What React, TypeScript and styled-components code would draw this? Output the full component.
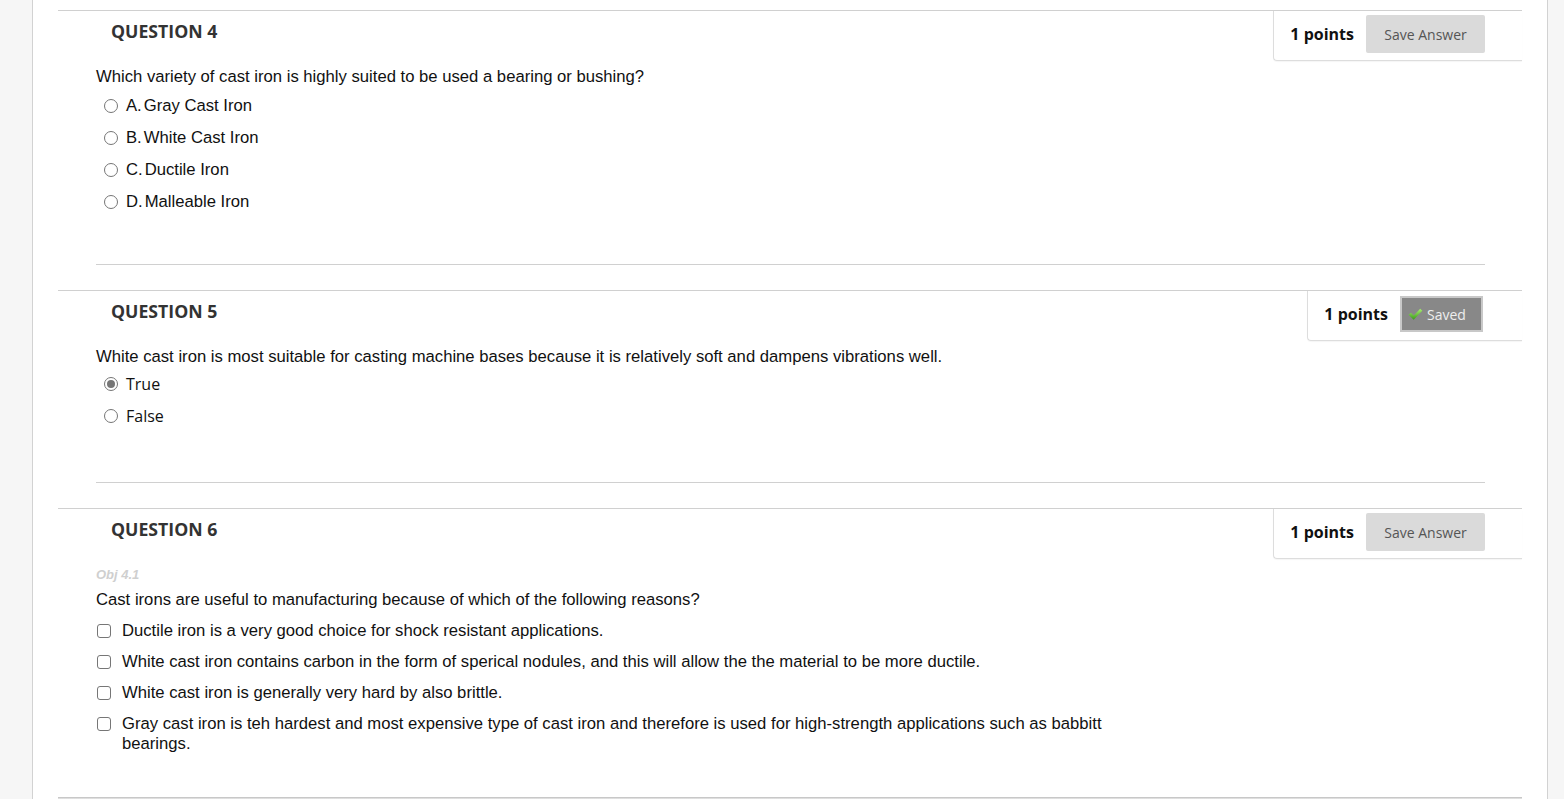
import React from 'react';
import styled, { createGlobalStyle } from 'styled-components';

const GlobalStyle = createGlobalStyle`
  html, body {
    margin: 0;
    padding: 0;
    background: #f6f6f6;
  }
  body {
    font-family: "Liberation Sans", Arial, sans-serif;
    overflow: hidden;
  }
`;

type Choice = { label: string; prefix?: string; checked?: boolean };

type Question = {
  number: number;
  text: string;
  kind: 'radio' | 'check';
  saved?: boolean;
  objective?: string;
  openSans?: boolean;
  bottom: number;
  choices: Choice[];
};

const questions: Question[] = [
  {
    number: 4,
    text: 'Which variety of cast iron is highly suited to be used a bearing or bushing?',
    kind: 'radio',
    bottom: 46,
    choices: [
      { prefix: 'A.', label: 'Gray Cast Iron' },
      { prefix: 'B.', label: 'White Cast Iron' },
      { prefix: 'C.', label: 'Ductile Iron' },
      { prefix: 'D.', label: 'Malleable Iron' },
    ],
  },
  {
    number: 5,
    text: 'White cast iron is most suitable for casting machine bases because it is relatively soft and dampens vibrations well.',
    kind: 'radio',
    saved: true,
    openSans: true,
    bottom: 50,
    choices: [{ label: 'True', checked: true }, { label: 'False' }],
  },
  {
    number: 6,
    text: 'Cast irons are useful to manufacturing because of which of the following reasons?',
    kind: 'check',
    objective: 'Obj 4.1',
    bottom: 38,
    choices: [
      { label: 'Ductile iron is a very good choice for shock resistant applications.' },
      { label: 'White cast iron contains carbon in the form of sperical nodules, and this will allow the the material to be more ductile.' },
      { label: 'White cast iron is generally very hard by also brittle.' },
      { label: 'Gray cast iron is teh hardest and most expensive type of cast iron and therefore is used for high-strength applications such as babbitt bearings.' },
    ],
  },
];

const CheckMark = () => (
  <svg width="15" height="13" viewBox="0 0 14 12">
    <defs>
      <linearGradient id="chk" x1="0" y1="0" x2="0" y2="1">
        <stop offset="0" stopColor="#a8f070" />
        <stop offset="1" stopColor="#3c9a1a" />
      </linearGradient>
    </defs>
    <path d="M0.5 6.2 L2.8 4.4 L5.3 6.9 L11.4 0.6 L13.4 2.4 L5.3 10.8 Z" fill="url(#chk)" />
  </svg>
);

const App = () => {
  return (
    <>
      <GlobalStyle />
      <Page>
        <LeftGutter />
        <Main>
          {questions.map((q, idx) => {
            const last = idx === questions.length - 1;
            return (
              <Block key={q.number} $last={last}>
                <Header>
                  <Title>QUESTION {q.number}</Title>
                  <PointsBox>
                    <Points>1 points</Points>
                    {q.saved ? (
                      <SavedButton>
                        <CheckMark />
                        Saved
                      </SavedButton>
                    ) : (
                      <SaveButton>Save Answer</SaveButton>
                    )}
                  </PointsBox>
                </Header>
                <Body $last={last} $bottom={q.bottom}>
                  {q.objective && <Objective>{q.objective}</Objective>}
                  <QuestionText>{q.text}</QuestionText>
                  <Choices $gap={q.kind === 'check' ? 5 : q.openSans ? 1 : 3}>
                    {q.choices.map((c, i) =>
                      q.kind === 'radio' ? (
                        <RadioRow key={i}>
                          <Radio $checked={!!c.checked} />
                          <ChoiceLabel $openSans={!!q.openSans}>
                            {c.prefix && <Prefix>{c.prefix}</Prefix>}
                            {c.label}
                          </ChoiceLabel>
                        </RadioRow>
                      ) : (
                        <CheckRow key={i}>
                          <Box />
                          <CheckLabel>{c.label}</CheckLabel>
                        </CheckRow>
                      )
                    )}
                  </Choices>
                </Body>
              </Block>
            );
          })}
          <NextBlock />
        </Main>
        <RightGutter />
      </Page>
    </>
  );
};

export default App;

const Page = styled.div`
  display: flex;
  min-height: 100vh;
  background: #f6f6f6;
`;

const LeftGutter = styled.div`
  width: 32px;
  flex-shrink: 0;
  background: #f6f6f6;
`;

const RightGutter = styled.div`
  flex: 1;
  background: #f6f6f6;
`;

const Main = styled.div`
  width: 1516px;
  flex-shrink: 0;
  background: #fff;
  border-left: 1px solid #d2d2d2;
  border-right: 1px solid #d2d2d2;
  padding: 10px 25px 0 25px;
  box-sizing: border-box;
`;

const Block = styled.div<{ $last: boolean }>`
  border-top: 1px solid #d0d0d0;
  margin-bottom: ${(p) => (p.$last ? '0' : '25px')};
`;

const Header = styled.div`
  display: flex;
  justify-content: space-between;
  align-items: flex-start;
`;

const Title = styled.h2`
  margin: 0;
  padding: 8px 0 0 53px;
  font-family: "Open Sans", sans-serif;
  font-weight: 700;
  font-size: 17.7px;
  line-height: 24px;
  color: #333;
`;

const PointsBox = styled.div`
  display: flex;
  align-items: center;
  gap: 12px;
  padding: 4px 37px 7px 16px;
  border-left: 1px solid #ddd;
  border-bottom: 1px solid #ddd;
  border-bottom-left-radius: 4px;
  box-shadow: 0 1px 1px rgba(0, 0, 0, 0.04);
`;

const Points = styled.span`
  font-family: "Open Sans", sans-serif;
  font-weight: 700;
  font-size: 16px;
  color: #111;
`;

const SaveButton = styled.button`
  width: 119px;
  height: 38px;
  border: none;
  border-radius: 2px;
  background: #dadada;
  color: #555;
  font-family: "Open Sans", sans-serif;
  font-size: 14px;
  padding: 0;
`;

const SavedButton = styled.button`
  display: flex;
  align-items: center;
  gap: 4px;
  width: 83px;
  height: 36px;
  margin: 1px 2px 1px 0;
  border: 2px solid #c8c8c8;
  background: #888;
  color: #eee;
  font-family: "Open Sans", sans-serif;
  font-size: 14px;
  padding: 0 0 0 6px;
`;

const Body = styled.div<{ $last: boolean; $bottom: number }>`
  margin: 6px 37px 0 38px;
  padding-bottom: ${(p) => p.$bottom}px;
  border-bottom: ${(p) => (p.$last ? 'none' : '1px solid #d0d0d0')};
`;

const Objective = styled.div`
  font-style: italic;
  font-weight: 700;
  font-size: 13px;
  color: #cfcfcf;
  line-height: 20px;
  margin-top: 2px;
  margin-bottom: 5px;
`;

const QuestionText = styled.p`
  margin: 0;
  font-size: 16.67px;
  line-height: 20px;
  color: #111;
`;

const Choices = styled.div<{ $gap: number }>`
  margin-top: ${(p) => p.$gap}px;
`;

const RadioRow = styled.div`
  display: flex;
  align-items: center;
  height: 32px;
  padding-left: 8px;
`;

const Radio = styled.span<{ $checked: boolean }>`
  width: 14px;
  height: 14px;
  box-sizing: border-box;
  border-radius: 50%;
  border: 1px solid #767676;
  margin-right: 8px;
  display: flex;
  align-items: center;
  justify-content: center;
  &::after {
    content: '';
    width: 8px;
    height: 8px;
    border-radius: 50%;
    background: ${(p) => (p.$checked ? '#767676' : 'transparent')};
  }
`;

const ChoiceLabel = styled.span<{ $openSans: boolean }>`
  font-family: ${(p) => (p.$openSans ? '"Open Sans", sans-serif' : '"Liberation Sans", Arial, sans-serif')};
  font-size: ${(p) => (p.$openSans ? '16px' : '16.67px')};
  color: #111;
`;

const Prefix = styled.span`
  margin-right: 2px;
`;

const CheckRow = styled.div`
  display: flex;
  align-items: flex-start;
  padding: 6px 0 5px 1px;
`;

const Box = styled.span`
  flex-shrink: 0;
  width: 14px;
  height: 14px;
  box-sizing: border-box;
  border: 1px solid #767676;
  border-radius: 3px;
  margin: 3px 11px 0 0;
`;

const CheckLabel = styled.span`
  max-width: 1000px;
  font-size: 16.67px;
  line-height: 20px;
  color: #111;
`;

const NextBlock = styled.div`
  height: 4px;
  border-top: 1px solid #c8c8c8;
  background: linear-gradient(#dcdcdc, #f2f2f2);
`;
